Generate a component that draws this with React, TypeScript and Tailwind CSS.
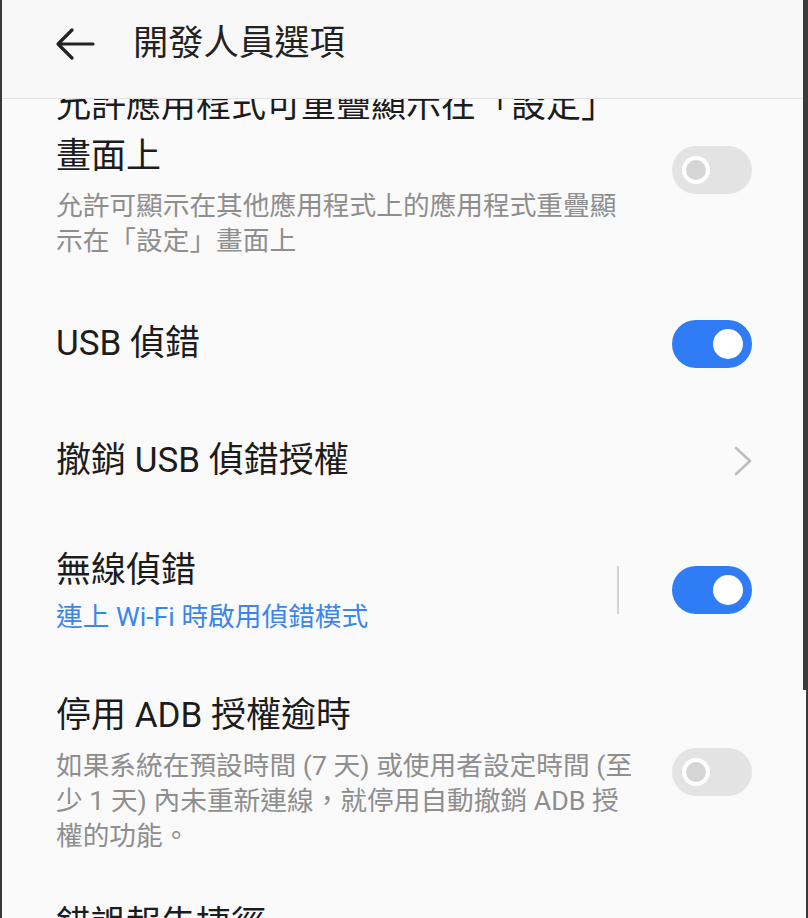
import React from "react";

function ToggleOff() {
  return (
    <div className="flex h-[48px] w-[80px] shrink-0 items-center rounded-full bg-[#e3e3e3] pl-[10px]">
      <div className="h-[28px] w-[28px] rounded-full border-[4px] border-white bg-[#d5d5d5]" />
    </div>
  );
}

function ToggleOn() {
  return (
    <div className="flex h-[48px] w-[80px] shrink-0 items-center justify-end rounded-full bg-[#2f7cf6] pr-[9px]">
      <div className="h-[30px] w-[30px] rounded-full bg-white" />
    </div>
  );
}

function Chevron() {
  return (
    <svg width="18" height="30" viewBox="0 0 18 30" className="shrink-0">
      <polyline
        points="2,2 16,15 2,28"
        fill="none"
        stroke="#bdbdbd"
        strokeWidth="2.6"
        strokeLinecap="round"
        strokeLinejoin="round"
      />
    </svg>
  );
}

function Title({ lines }: { lines: string[] }) {
  return (
    <div className="text-[35px] leading-[51px] text-[#1c1c1c]">
      {lines.map((l, i) => (
        <div key={i} className="whitespace-nowrap">
          {l}
        </div>
      ))}
    </div>
  );
}

function Sub({ lines, blue, gap }: { lines: string[]; blue?: boolean; gap: string }) {
  return (
    <div
      className={
        (blue ? "text-[#3a86ef] " : "text-[#8e8e8e] ") + "text-[26.7px] leading-[35px] " + gap
      }
    >
      {lines.map((l, i) => (
        <div key={i} className="whitespace-nowrap">
          {l}
        </div>
      ))}
    </div>
  );
}

export default function App() {
  return (
    <div className="flex h-[918px] w-[808px] overflow-hidden bg-[#fafafa] font-['Roboto','Noto_Sans_CJK_TC',sans-serif]">
      <div className="w-[2px] shrink-0 bg-[#3a3a3a]" />
      <div className="flex w-[801px] shrink-0 flex-col">
        <header className="relative z-10 flex h-[99px] shrink-0 items-center border-b border-[#e3e3e3] bg-[#f8f8f8] pb-[10px] pl-[53px]">
          <svg width="40" height="34" viewBox="0 0 40 34" className="shrink-0">
            <path
              d="M38 17 H3 M17 3 L3 17 L17 31"
              fill="none"
              stroke="#222"
              strokeWidth="3.2"
              strokeLinecap="round"
              strokeLinejoin="round"
            />
          </svg>
          <div className="ml-[38px] text-[35.3px] leading-none text-[#222]">開發人員選項</div>
        </header>
        <div className="flex-1 overflow-hidden">
          <div className="flex flex-col pl-[54px] pr-[51px]">
            <div className="-mt-[19px] flex items-center justify-between">
              <div>
                <Title lines={["允許應用程式可重疊顯示在「設定」", "畫面上"]} />
                <Sub gap="mt-[7px]" lines={["允許可顯示在其他應用程式上的應用程式重疊顯", "示在「設定」畫面上"]} />
              </div>
              <ToggleOff />
            </div>

            <div className="mt-[59px] flex items-center justify-between">
              <Title lines={["USB 偵錯"]} />
              <ToggleOn />
            </div>

            <div className="mt-[66px] flex items-center justify-between">
              <Title lines={["撤銷 USB 偵錯授權"]} />
              <Chevron />
            </div>

            <div className="mt-[59px] flex items-center justify-between">
              <div>
                <Title lines={["無線偵錯"]} />
                <Sub blue gap="mt-[4px]" lines={["連上 Wi-Fi 時啟用偵錯模式"]} />
              </div>
              <div className="flex items-center gap-[53px]">
                <div className="h-[48px] w-[2px] bg-[#d2d2d2]" />
                <ToggleOn />
              </div>
            </div>

            <div className="mt-[55px] flex items-center justify-between">
              <div>
                <Title lines={["停用 ADB 授權逾時"]} />
                <Sub
                  gap="mt-[8px]"
                  lines={[
                    "如果系統在預設時間 (7 天) 或使用者設定時間 (至",
                    "少 1 天) 內未重新連線，就停用自動撤銷 ADB 授",
                    "權的功能。",
                  ]}
                />
              </div>
              <ToggleOff />
            </div>

            <div className="mt-[45px] flex items-center justify-between">
              <Title lines={["錯誤報告捷徑"]} />
            </div>
          </div>
        </div>
      </div>
      <div className="flex w-[5px] shrink-0 flex-col">
        <div className="h-[690px] bg-[#3a3a3a]" />
        <div className="flex flex-1">
          <div className="w-[3px] bg-[#fafafa]" />
          <div className="w-[2px] bg-[#3a3a3a]" />
        </div>
      </div>
    </div>
  );
}
